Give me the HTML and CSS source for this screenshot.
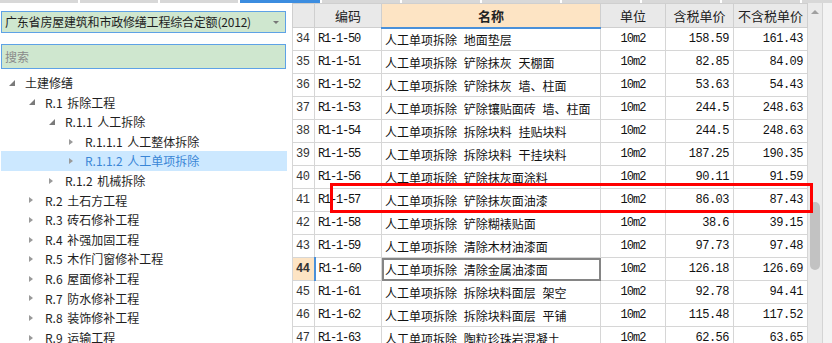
FILE: index.html
```html
<!DOCTYPE html>
<html lang="zh-CN">
<head>
    <meta charset="UTF-8">
    <title>定额库</title>
    <link rel="stylesheet" href="styles.css">
</head>
<body>
    <div class="tabs">
        <span class="tab"></span><span class="tab"></span><span class="tab"></span>
        <span class="tab active"></span>
        <span class="tab"></span><span class="tab"></span><span class="tab"></span>
        <span class="tab"></span><span class="tab"></span><span class="tab"></span><span class="tab"></span>
    </div>
    <div class="main">
        <aside class="side">
            <div class="select">广东省房屋建筑和市政修缮工程综合定额(2012)<span class="caret"></span></div>
            <div class="search">搜索</div>
            <ul class="tree">
                <li class="lv0 open"><i></i>土建修缮</li>
                <li class="lv1 open"><i></i>R.1 拆除工程</li>
                <li class="lv2 open"><i></i>R.1.1 人工拆除</li>
                <li class="lv3"><i></i>R.1.1.1 人工整体拆除</li>
                <li class="lv3 current"><i></i>R.1.1.2 人工单项拆除</li>
                <li class="lv2"><i></i>R.1.2 机械拆除</li>
                <li class="lv1"><i></i>R.2 土石方工程</li>
                <li class="lv1"><i></i>R.3 砖石修补工程</li>
                <li class="lv1"><i></i>R.4 补强加固工程</li>
                <li class="lv1"><i></i>R.5 木作门窗修补工程</li>
                <li class="lv1"><i></i>R.6 屋面修补工程</li>
                <li class="lv1"><i></i>R.7 防水修补工程</li>
                <li class="lv1"><i></i>R.8 装饰修补工程</li>
                <li class="lv1"><i></i>R.9 运输工程</li>
            </ul>
        </aside>
        <section class="grid">
            <table>
                <colgroup>
                    <col class="c-no"><col class="c-code"><col class="c-name">
                    <col class="c-unit"><col class="c-price"><col class="c-net">
                </colgroup>
                <thead>
                    <tr>
                        <th></th>
                        <th>编码</th>
                        <th class="sel-col">名称</th>
                        <th>单位</th>
                        <th>含税单价</th>
                        <th>不含税单价</th>
                    </tr>
                </thead>
                <tbody id="rows"></tbody>
            </table>
            <div class="mark"></div>
        </section>
        <div class="vscroll">
            <span class="up"></span>
            <span class="thumb"></span>
        </div>
        <div class="edge"></div>
    </div>

    <script>
        const items = [
            [34, 'R1-1-50', '人工单项拆除 地面垫层', '158.59', '161.43'],
            [35, 'R1-1-51', '人工单项拆除 铲除抹灰 天棚面', '82.85', '84.09'],
            [36, 'R1-1-52', '人工单项拆除 铲除抹灰 墙、柱面', '53.63', '54.43'],
            [37, 'R1-1-53', '人工单项拆除 铲除镶贴面砖 墙、柱面', '244.5', '248.63'],
            [38, 'R1-1-54', '人工单项拆除 拆除块料 挂贴块料', '244.5', '248.63'],
            [39, 'R1-1-55', '人工单项拆除 拆除块料 干挂块料', '187.25', '190.35'],
            [40, 'R1-1-56', '人工单项拆除 铲除抹灰面涂料', '90.11', '91.59'],
            [41, 'R1-1-57', '人工单项拆除 铲除抹灰面油漆', '86.03', '87.43'],
            [42, 'R1-1-58', '人工单项拆除 铲除糊裱贴面', '38.6', '39.15'],
            [43, 'R1-1-59', '人工单项拆除 清除木材油漆面', '97.73', '97.48'],
            [44, 'R1-1-60', '人工单项拆除 清除金属油漆面', '126.18', '126.69'],
            [45, 'R1-1-61', '人工单项拆除 拆除块料面层 架空', '92.78', '94.41'],
            [46, 'R1-1-62', '人工单项拆除 拆除块料面层 平铺', '115.48', '117.52'],
            [47, 'R1-1-63', '人工单项拆除 陶粒珍珠岩混凝土', '62.56', '63.65']
        ];

        const body = document.getElementById('rows');
        items.forEach(item => {
            const tr = document.createElement('tr');
            const active = item[0] === 44;
            tr.innerHTML = `
                <td class="no${active ? ' on' : ''}">${item[0]}</td>
                <td class="code">${item[1]}</td>
                <td class="name${active ? ' focus' : ''}">${item[2]}</td>
                <td class="unit">10m2</td>
                <td class="num">${item[3]}</td>
                <td class="num">${item[4]}</td>
            `;
            body.appendChild(tr);
        });
    </script>
</body>
</html>
```

FILE: styles.css
```css
html, body { margin: 0; padding: 0; }
body { width: 832px; height: 343px; overflow: hidden; background: #fff; font-family: "Noto Sans CJK SC", "Noto Sans", sans-serif; color: #1e1e1e; }

.tabs { display: flex; gap: 2px; height: 3px; overflow: hidden; }
.tab { flex: 0 0 78px; background: #d8d8d8; }
.tab.active { background: #3c8de0; flex-basis: 80px; }

.main { display: flex; height: 340px; }

.side { width: 292px; flex: none; padding: 8px 0 0 1px; box-sizing: border-box; }
.select, .search { width: 285px; box-sizing: border-box; border: 1px solid #5ea2e6; background: #cfe7cf; font-size: 12px; padding-left: 3px; }
.select { height: 22px; line-height: 20px; display: flex; align-items: center; justify-content: space-between; letter-spacing: -0.2px; }
.caret { width: 0; height: 0; border-left: 3px solid transparent; border-right: 3px solid transparent; border-top: 3px solid #777; margin-right: 6px; }
.search { height: 25px; line-height: 23px; margin-top: 11px; color: #8a8a8a; }

.tree { list-style: none; margin: 4px 0 0; padding: 0; width: 286px; }
.tree li { height: 19.6px; line-height: 19.6px; font-size: 12px; white-space: nowrap; display: flex; align-items: center; word-spacing: 2px; }
.tree li i { width: 16px; display: flex; align-items: center; }
.tree li i::before { content: ""; width: 0; height: 0; border-top: 3.5px solid transparent; border-bottom: 3.5px solid transparent; border-left: 4px solid #9a9a9a; }
.tree li.open i::before { border-top: 0; border-left: 6px solid transparent; border-bottom: 6px solid #7a7a7a; }
.tree .lv0 { padding-left: 8px; }
.tree .lv1 { padding-left: 28px; }
.tree .lv2 { padding-left: 48px; }
.tree .lv3 { padding-left: 68px; }
.tree .current { background: #cce8ff; color: #3a86d6; }

.grid { position: relative; width: 515px; flex: none; }
table { border-collapse: collapse; table-layout: fixed; width: 515px; }
.c-no { width: 22px; }
.c-code { width: 67px; }
.c-name { width: 219px; }
.c-unit { width: 65px; }
.c-price { width: 68px; }
.c-net { width: 74px; }
th, td { border: 1px solid #d6d6d6; padding: 0 3px; white-space: nowrap; overflow: hidden; }
thead tr { height: 24px; }
th { background: #e9e9e9; font-weight: normal; font-size: 13px; color: #222; border-color: #cfcfcf; }
th.sel-col { background: #fde4c4; font-weight: bold; border-bottom: 2px solid #4a90d9; }
tbody tr { height: 23px; }
td { font-size: 12px; color: #111; }
td.name { word-spacing: 4px; }
td.no, td.code, td.unit, td.num { font-family: "Liberation Mono", "DejaVu Sans Mono", monospace; font-size: 12px; }
td.no { padding-left: 3px; color: #333; letter-spacing: -0.5px; }
td.no.on { background: #fde4c4; font-weight: bold; border-right: 2px solid #4a90d9; }
td.code { letter-spacing: -1.2px; }
td.unit { text-align: center; letter-spacing: -1px; }
td.num { text-align: right; padding-right: 4px; letter-spacing: -0.5px; }
td.focus { outline: 2px solid #858585; outline-offset: -2px; }

.mark { position: absolute; left: 38px; top: 180px; width: 477px; height: 24px; border: 3px solid #f00; }

.vscroll { width: 15px; flex: none; background: #ebebeb; display: flex; flex-direction: column; align-items: center; }
.up { margin-top: 7px; width: 0; height: 0; border-left: 4px solid transparent; border-right: 4px solid transparent; border-bottom: 4px solid #a0a0a0; }
.thumb { margin-top: 188px; width: 10px; height: 68px; border-radius: 5px; background: #c2c2c2; }
.edge { flex: 1; background: #f3f3f3; border-left: 1px solid #d4d4d4; }
```
